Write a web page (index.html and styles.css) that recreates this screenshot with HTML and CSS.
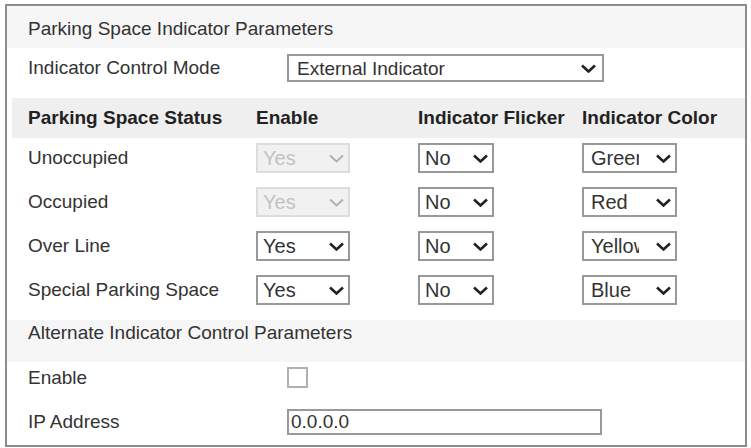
FILE: index.html
```html
<!DOCTYPE html>
<html lang="en">
<head>
  <meta charset="UTF-8">
  <title>Parking Space Indicator</title>
  <link rel="stylesheet" href="styles.css">
</head>
<body>

  <div class="panel">
    <div class="band title">Parking Space Indicator Parameters</div>

    <div class="field mode-row">
      <label class="field-label">Indicator Control Mode</label>
      <div class="pick wide">
        <select>
          <option>External Indicator</option>
          <option>Internal Indicator</option>
        </select>
        <svg class="chev" viewBox="0 0 16 9"><path d="M1.5 1.5 L8 7.5 L14.5 1.5"/></svg>
      </div>
    </div>

    <div class="band grid head">
      <span>Parking Space Status</span>
      <span>Enable</span>
      <span>Indicator Flicker</span>
      <span>Indicator Color</span>
    </div>

    <div class="grid rows">
      <span>Unoccupied</span>
      <div class="pick en"><select disabled><option>Yes</option></select><svg class="chev" viewBox="0 0 16 9"><path d="M1.5 1.5 L8 7.5 L14.5 1.5"/></svg></div>
      <div class="pick fl"><select><option>No</option><option>Yes</option></select><svg class="chev" viewBox="0 0 16 9"><path d="M1.5 1.5 L8 7.5 L14.5 1.5"/></svg></div>
      <div class="pick co"><select><option>Green</option><option>Red</option></select><svg class="chev" viewBox="0 0 16 9"><path d="M1.5 1.5 L8 7.5 L14.5 1.5"/></svg></div>

      <span>Occupied</span>
      <div class="pick en"><select disabled><option>Yes</option></select><svg class="chev" viewBox="0 0 16 9"><path d="M1.5 1.5 L8 7.5 L14.5 1.5"/></svg></div>
      <div class="pick fl"><select><option>No</option><option>Yes</option></select><svg class="chev" viewBox="0 0 16 9"><path d="M1.5 1.5 L8 7.5 L14.5 1.5"/></svg></div>
      <div class="pick co"><select><option>Red</option><option>Green</option></select><svg class="chev" viewBox="0 0 16 9"><path d="M1.5 1.5 L8 7.5 L14.5 1.5"/></svg></div>

      <span>Over Line</span>
      <div class="pick en"><select><option>Yes</option><option>No</option></select><svg class="chev" viewBox="0 0 16 9"><path d="M1.5 1.5 L8 7.5 L14.5 1.5"/></svg></div>
      <div class="pick fl"><select><option>No</option><option>Yes</option></select><svg class="chev" viewBox="0 0 16 9"><path d="M1.5 1.5 L8 7.5 L14.5 1.5"/></svg></div>
      <div class="pick co"><select><option>Yellow</option><option>Red</option></select><svg class="chev" viewBox="0 0 16 9"><path d="M1.5 1.5 L8 7.5 L14.5 1.5"/></svg></div>

      <span>Special Parking Space</span>
      <div class="pick en"><select><option>Yes</option><option>No</option></select><svg class="chev" viewBox="0 0 16 9"><path d="M1.5 1.5 L8 7.5 L14.5 1.5"/></svg></div>
      <div class="pick fl"><select><option>No</option><option>Yes</option></select><svg class="chev" viewBox="0 0 16 9"><path d="M1.5 1.5 L8 7.5 L14.5 1.5"/></svg></div>
      <div class="pick co"><select><option>Blue</option><option>Red</option></select><svg class="chev" viewBox="0 0 16 9"><path d="M1.5 1.5 L8 7.5 L14.5 1.5"/></svg></div>
    </div>

    <div class="band title alt">Alternate Indicator Control Parameters</div>

    <div class="field enable-row">
      <label class="field-label">Enable</label>
      <input type="checkbox" class="check">
    </div>

    <div class="field ip-row">
      <label class="field-label">IP Address</label>
      <input type="text" class="ip" value="0.0.0.0">
    </div>
  </div>

</body>
</html>
```

FILE: styles.css
```css
body {
  margin: 0;
  font-family: "Liberation Sans", Arial, sans-serif;
  font-size: 19px;
  color: #333333;
  background-color: #ffffff;
}

.panel {
  box-sizing: border-box;
  width: 742px;
  height: 443px;
  margin: 4px 0 0 5px;
  border: 2px solid #8c8c8c;
}

.band {
  background-color: #f6f6f6;
}

.title {
  height: 42px;
  box-sizing: border-box;
  padding: 12px 0 0 21px;
  line-height: 22px;
}

.field {
  display: flex;
  align-items: center;
  padding-left: 21px;
}

.field-label {
  width: 259px;
  flex-shrink: 0;
}

.mode-row {
  height: 28px;
  padding-top: 6px;
  padding-bottom: 16px;
}

.grid {
  display: grid;
  grid-template-columns: 228px 162px 164px 1fr;
  align-items: center;
}

.head {
  height: 40px;
  margin-left: 5px;
  padding-left: 16px;
  background-color: #efefef;
  font-weight: bold;
  color: #222222;
}

.rows {
  padding: 5px 0 0 21px;
  grid-auto-rows: 30px;
  row-gap: 14px;
}

.pick {
  position: relative;
  height: 30px;
}

.pick select {
  appearance: none;
  -webkit-appearance: none;
  box-sizing: border-box;
  width: 100%;
  height: 100%;
  margin: 0;
  padding: 0 28px 0 5px;
  border: 2px solid #999999;
  border-radius: 0;
  background-color: #ffffff;
  font-family: inherit;
  font-size: 20px;
  color: #333333;
}

.pick select:disabled {
  background-color: #ececec;
  border-color: #cfcfcf;
  color: #a8a8a8;
}

.chev {
  position: absolute;
  top: 11px;
  right: 5px;
  width: 17px;
  height: 9px;
  pointer-events: none;
}

.chev path {
  fill: none;
  stroke: #222222;
  stroke-width: 2.6;
}

.pick select:disabled + .chev path {
  stroke: #b0b0b0;
  stroke-width: 2;
}

.en { width: 94px; }
.fl { width: 76px; }
.co { width: 95px; }

.co select {
  padding-left: 7px;
  padding-right: 36px;
}

.wide {
  width: 317px;
  height: 28px;
}

.wide select {
  padding-left: 8px;
  font-size: 19px;
}

.wide .chev {
  top: 10px;
  right: 7px;
}

.alt {
  margin-top: 15px;
  padding-top: 2px;
}

.enable-row {
  height: 21px;
  padding-top: 5px;
}

.check {
  appearance: none;
  -webkit-appearance: none;
  width: 21px;
  height: 21px;
  margin: 0;
  border: 2px solid #b0b0b0;
  background-color: #ffffff;
}

.ip-row {
  height: 26px;
  margin-top: 21px;
}

.ip {
  box-sizing: border-box;
  width: 315px;
  height: 26px;
  margin: 0;
  padding: 0 2px;
  border: 2px solid #999999;
  font-family: inherit;
  font-size: 19px;
  color: #333333;
}
```
